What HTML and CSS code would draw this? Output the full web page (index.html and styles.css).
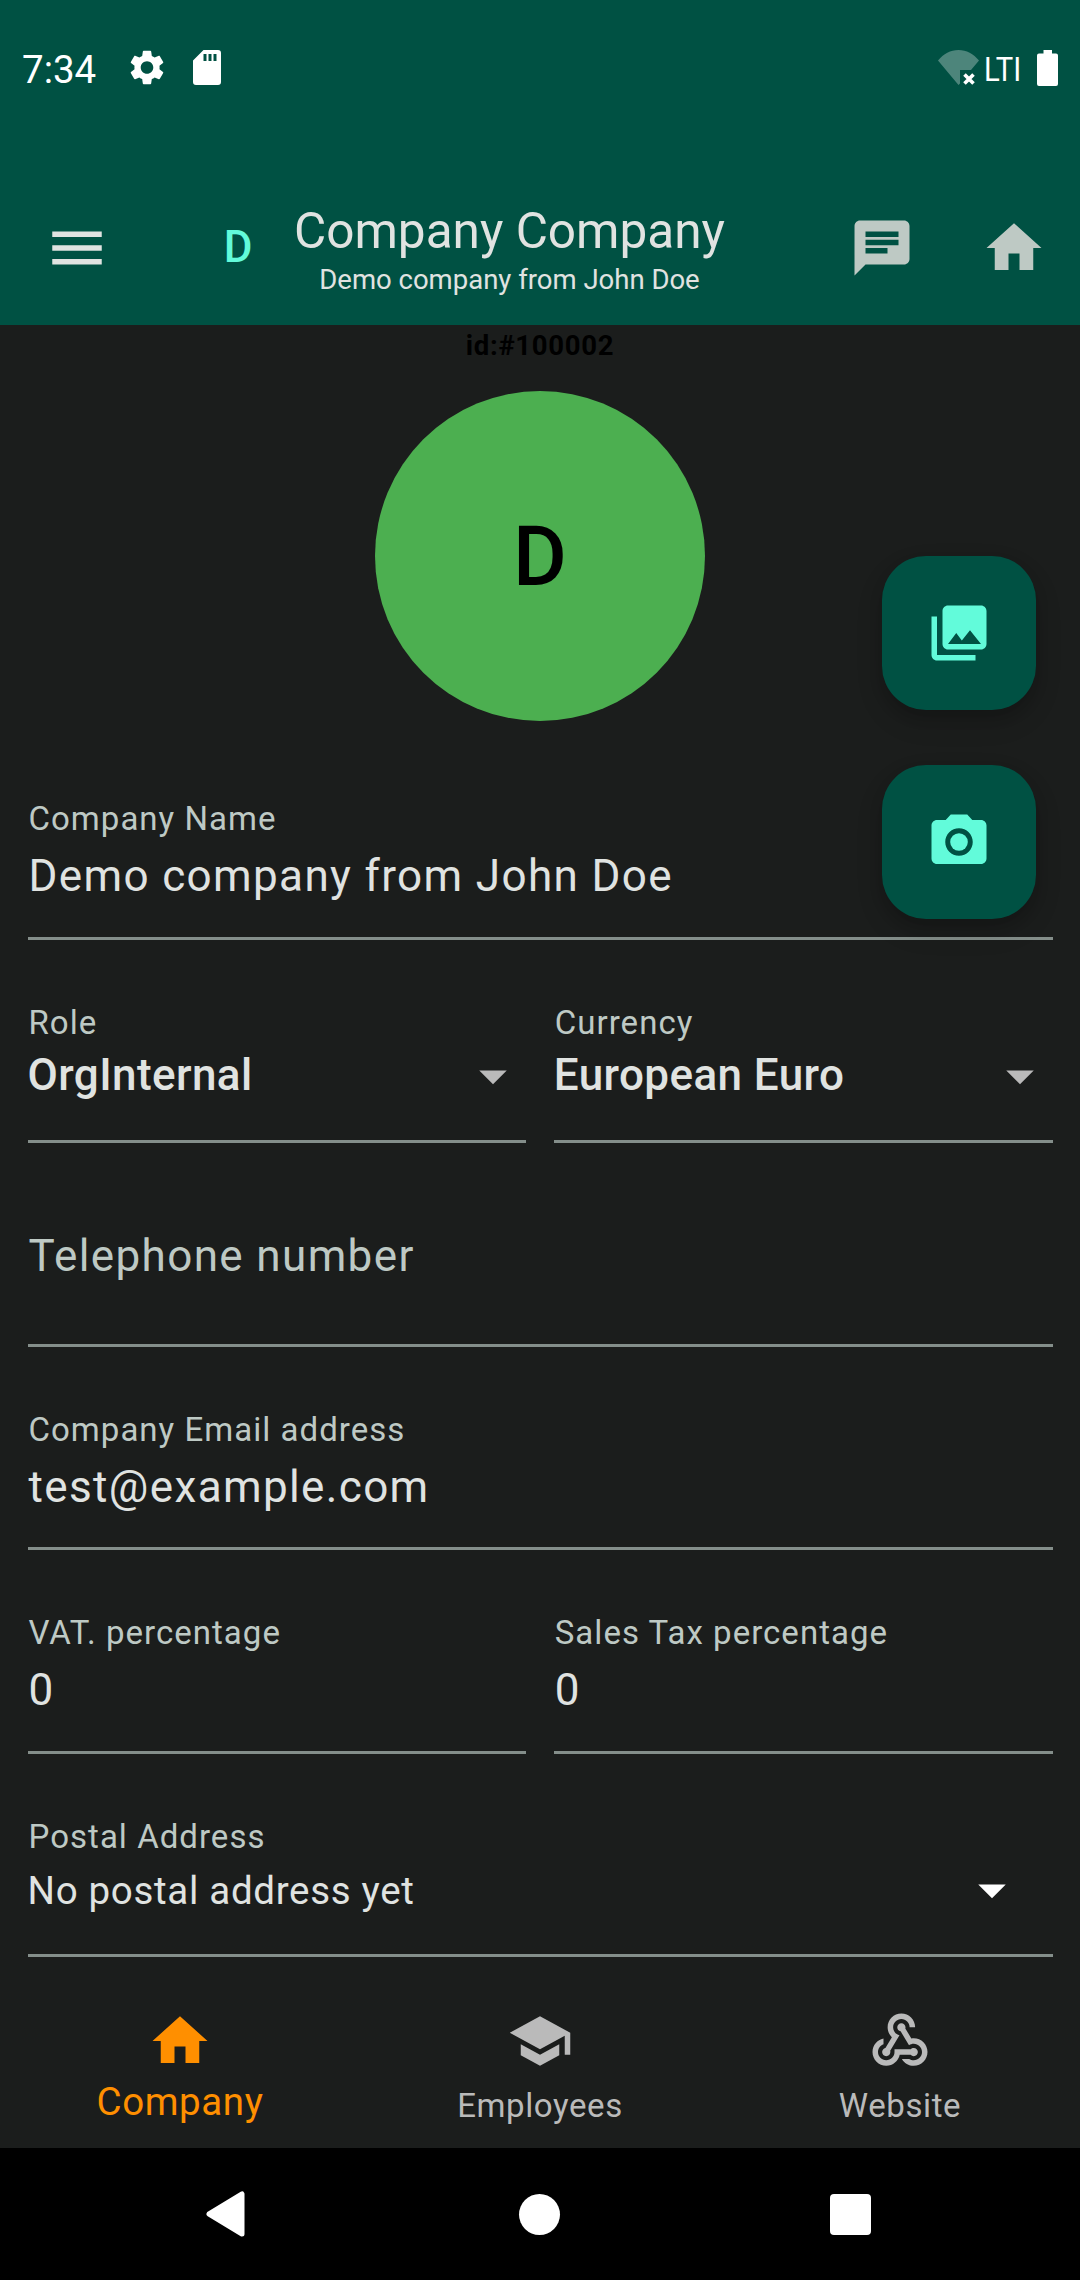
FILE: index.html
```html
<!DOCTYPE html>
<html lang="en">
<head>
<meta charset="utf-8">
<title>Company Company</title>
<link rel="stylesheet" href="styles.css">
</head>
<body>
<div class="screen">
  <header class="header">
    <div class="status-bar">
      <span class="clock">7:34</span>
      <svg class="status-gear" viewBox="2.27 2 19.46 20"><path d="M19.14 12.94c.04-.3.06-.61.06-.94 0-.32-.02-.64-.07-.94l2.03-1.58c.18-.14.23-.41.12-.61l-1.92-3.32c-.12-.22-.37-.29-.59-.22l-2.39.96c-.5-.38-1.03-.7-1.62-.94l-.36-2.54c-.04-.24-.24-.41-.48-.41h-3.84c-.24 0-.43.17-.47.41l-.36 2.54c-.59.24-1.13.57-1.62.94l-2.39-.96c-.22-.08-.47 0-.59.22L2.74 8.87c-.12.21-.08.47.12.61l2.03 1.58c-.05.3-.09.63-.09.94s.02.64.07.94l-2.03 1.58c-.18.14-.23.41-.12.61l1.92 3.32c.12.22.37.29.59.22l2.39-.96c.5.38 1.03.7 1.62.94l.36 2.54c.05.24.24.41.48.41h3.84c.24 0 .44-.17.47-.41l.36-2.54c.59-.24 1.13-.56 1.62-.94l2.39.96c.22.08.47 0 .59-.22l1.92-3.32c.12-.22.07-.47-.12-.61l-2.01-1.58zM12 15.6c-1.98 0-3.6-1.62-3.6-3.6s1.62-3.6 3.6-3.6 3.6 1.62 3.6 3.6-1.62 3.6-3.6 3.6z"/></svg>
      <svg class="status-sd" viewBox="0 0 28 35"><path fill-rule="evenodd" d="M10.500 0H25a3 3 0 0 1 3 3V32a3 3 0 0 1-3 3H3a3 3 0 0 1-3-3V10.500zM10.500 4v7h3V4zM15.500 4v7h3V4zM20.500 4v7h3V4z"/></svg>
      <span class="status-spacer"></span>
      <svg class="status-wifi" viewBox="0 0 41 35"><path opacity=".3" d="M0 10.500C5.500 4 12.500 0 20.500 0S35.500 4 41 10.500L33 20H22V33.500L20.500 35z"/><path d="M26.500 24.500l9 9M35.500 24.500l-9 9" fill="none" stroke="#fff" stroke-width="3.600"/></svg>
      <span class="network">LTI</span>
      <svg class="status-battery" viewBox="0 0 21 36"><path d="M6.500 0h8.500v3.500h4a2 2 0 0 1 2 2V34a2 2 0 0 1-2 2H2a2 2 0 0 1-2-2V5.500a2 2 0 0 1 2-2h4.500z"/></svg>
    </div>
    <div class="app-bar">
      <div class="bar-button"><svg class="icon" viewBox="0 0 24 24"><path d="M3 18h18v-2H3v2zm0-5h18v-2H3v2zm0-7v2h18V6H3z"/></svg></div>
      <div class="bar-avatar">D</div>
      <div class="bar-titles">
        <div class="bar-title">Company Company</div>
        <div class="bar-subtitle">Demo company from John Doe</div>
      </div>
      <div class="bar-actions">
        <div class="bar-button"><svg class="icon" viewBox="0 0 24 24"><path d="M20 2H4c-1.100 0-1.990.9-1.990 2L2 22l4-4h14c1.100 0 2-.9 2-2V4c0-1.100-.9-2-2-2zM6 9h12v2H6V9zm8 5H6v-2h8v2zm4-6H6V6h12v2z"/></svg></div>
        <div class="bar-button"><svg class="icon" viewBox="0 0 24 24"><path d="M10 20v-6h4v6h5v-8h3L12 3 2 12h3v8z"/></svg></div>
      </div>
    </div>
  </header>

  <main class="content">
    <div class="record-id">id:#100002</div>
    <div class="avatar">D</div>
    <form class="form">
      <div class="row">
        <div class="field"><div class="label">Company Name</div><div class="value">Demo company from John Doe</div></div>
      </div>
      <div class="row">
        <div class="field"><div class="label">Role</div><div class="select">OrgInternal<svg class="icon" viewBox="0 0 24 24"><path d="M7 10l5 5 5-5z"/></svg></div></div>
        <div class="field"><div class="label">Currency</div><div class="select">European Euro<svg class="icon" viewBox="0 0 24 24"><path d="M7 10l5 5 5-5z"/></svg></div></div>
      </div>
      <div class="row">
        <div class="field"><div class="placeholder">Telephone number</div></div>
      </div>
      <div class="row">
        <div class="field"><div class="label">Company Email address</div><div class="value">test@example.com</div></div>
      </div>
      <div class="row">
        <div class="field"><div class="label">VAT. percentage</div><div class="value">0</div></div>
        <div class="field"><div class="label">Sales Tax percentage</div><div class="value">0</div></div>
      </div>
      <div class="row">
        <div class="field"><div class="label">Postal Address</div><div class="select select-address">No postal address yet<svg class="icon" viewBox="0 0 24 24"><path d="M7 10l5 5 5-5z"/></svg></div></div>
      </div>
    </form>
    <div class="fabs">
      <div class="fab"><svg class="icon" viewBox="0 0 24 24"><path d="M22 16V4c0-1.100-.9-2-2-2H8c-1.100 0-2 .9-2 2v12c0 1.100.9 2 2 2h12c1.100 0 2-.9 2-2zm-11-4l2.030 2.710L16 11l4 5H8l3-4zM2 6v14c0 1.100.9 2 2 2h14v-2H4V6H2z"/></svg></div>
      <div class="fab"><svg class="icon" viewBox="0 0 24 24"><circle cx="12" cy="12" r="3.200"/><path d="M9 2L7.170 4H4c-1.100 0-2 .9-2 2v12c0 1.100.9 2 2 2h16c1.100 0 2-.9 2-2V6c0-1.100-.9-2-2-2h-3.170L15 2H9zm3 15c-2.760 0-5-2.240-5-5s2.240-5 5-5 5 2.240 5 5-2.240 5-5 5z"/></svg></div>
    </div>
  </main>

  <nav class="tabs">
    <div class="tab tab-active"><svg class="icon" viewBox="0 0 24 24"><path d="M10 20v-6h4v6h5v-8h3L12 3 2 12h3v8z"/></svg><span>Company</span></div>
    <div class="tab"><svg class="icon" viewBox="0 0 24 24"><path d="M5 13.180v4L12 21l7-3.820v-4L12 17l-7-3.820zM12 3L1 9l11 6 9-4.910V17h2V9L12 3z"/></svg><span>Employees</span></div>
    <div class="tab"><svg class="icon" viewBox="0 0 24 24"><path d="M10,15l5.880,0c0.270-0.310,0.670-0.500,1.120-0.500c0.830,0,1.500,0.670,1.500,1.500c0,0.830-0.670,1.500-1.500,1.500c-0.440,0-0.840-0.190-1.120-0.500l-3.980,0c-0.460,2.280-2.480,4-4.900,4c-2.760,0-5-2.240-5-5c0-2.420,1.720-4.440,4-4.900l0,2.070C4.840,13.580,4,14.700,4,16c0,1.650,1.350,3,3,3s3-1.350,3-3V15z M12.500,4c1.650,0,3,1.350,3,3h2c0-2.760-2.240-5-5-5c-2.760,0-5,2.240-5,5c0,1.430,0.600,2.710,1.550,3.620l-2.350,3.900C6.020,14.660,5.500,15.270,5.500,16c0,0.830,0.670,1.500,1.500,1.500s1.500-0.670,1.500-1.500c0-0.160-0.020-0.310-0.070-0.450l3.380-5.630C10.490,9.610,9.500,8.420,9.500,7C9.500,5.350,10.850,4,12.500,4z M17,13c-0.640,0-1.230,0.200-1.720,0.540l-3.050-5.070C11.530,8.350,11,7.740,11,7c0-0.830,0.670-1.500,1.500-1.500S14,6.170,14,7c0,0.150-0.020,0.290-0.060,0.430l2.190,3.650C16.410,11.030,16.700,11,17,11c2.760,0,5,2.240,5,5c0,2.760-2.240,5-5,5c-1.850,0-3.470-1.010-4.330-2.500l2.670,0C15.820,18.820,16.390,19,17,19c1.650,0,3-1.350,3-3S18.650,13,17,13z"/></svg><span>Website</span></div>
  </nav>

  <div class="system-nav">
    <svg class="nav-back" viewBox="0 0 39 46"><path d="M3 23L36 3V43z" stroke="#fff" stroke-width="5" stroke-linejoin="round"/></svg>
    <span class="nav-home"></span>
    <span class="nav-recents"></span>
  </div>
</div>
</body>
</html>
```
FILE: styles.css
```css
* { box-sizing: border-box; }

body {
  margin: 0;
  background: #1b1d1c;
  font-family: Roboto, "Liberation Sans", sans-serif;
  color: #e0e3e1;
}

svg { display: block; fill: currentColor; flex: none; }

.icon { width: 66px; height: 66px; }

.screen {
  display: flex;
  flex-direction: column;
  width: 1080px;
  height: 2280px;
  overflow: hidden;
  background: #1b1d1c;
}

/* Header */
.header { height: 325px; background: #005143; }

.status-bar {
  display: flex;
  align-items: center;
  height: 171px;
  padding: 0 22px 36px 22px;
  color: #fff;
}

.clock { width: 77px; padding-top: 5px; font-size: 38.5px; line-height: 46px; }
.status-gear { width: 34px; height: 35px; margin-left: 31px; }
.status-sd { width: 28px; height: 35px; margin-left: 29px; }
.status-spacer { flex: 1; }
.status-wifi { width: 41px; height: 35px; }
.network {
  width: 37px;
  margin-left: 5px;
  padding-top: 2px;
  font-size: 34px;
  line-height: 42px;
  transform: scaleX(0.86);
  transform-origin: 0 50%;
}
.status-battery { width: 21px; height: 36px; margin-left: 16px; }

.app-bar { display: flex; align-items: center; height: 154px; padding-left: 11px; }
.bar-button { display: flex; align-items: center; justify-content: center; width: 132px; height: 132px; }
.bar-avatar {
  width: 110px;
  margin-left: 40px;
  padding-bottom: 2px;
  text-align: center;
  font-size: 44px;
  font-weight: 500;
  line-height: 52px;
  color: #62fbda;
}
.bar-titles { width: 431px; margin-left: 1px; text-align: center; white-space: nowrap; }
.bar-title { font-size: 49.5px; line-height: 58px; }
.bar-subtitle { height: 34px; padding-top: 4px; font-size: 27.5px; line-height: 32px; }
.bar-actions { display: flex; margin-left: auto; color: #bec9c4; }

/* Content */
.content { position: relative; flex: 1; }

.record-id {
  height: 66px;
  padding-top: 4px;
  text-align: center;
  font-size: 27.5px;
  font-weight: 700;
  line-height: 33px;
  letter-spacing: 0.69px;
  color: #000;
}

.avatar {
  width: 330px;
  height: 330px;
  margin: 0 auto;
  border-radius: 50%;
  background: #4caf50;
  text-align: center;
  font-size: 82.5px;
  font-weight: 500;
  line-height: 331px;
  color: #000;
}

.form { padding: 15.25px 27.5px 0; }
.row { display: flex; gap: 27.5px; }
.field { flex: 1; height: 203.5px; padding-top: 63px; border-bottom: 3px solid #848e8a; }

.label {
  padding-left: 1px;
  font-size: 33px;
  line-height: 40px;
  letter-spacing: 1.03px;
  color: #bec9c4;
}
.value { padding: 11px 0 0 1px; font-size: 44px; line-height: 52px; letter-spacing: 1.375px; }
.placeholder { padding: 23.5px 0 0 1px; font-size: 44px; line-height: 52px; letter-spacing: 1.375px; color: #bec9c4; }

.select {
  display: flex;
  align-items: center;
  justify-content: space-between;
  height: 66px;
  padding-bottom: 1px;
  font-size: 44px;
  font-weight: 500;
  letter-spacing: 0.41px;
}
.select .icon { margin-top: 1px; color: #bababa; }
.select-address { padding: 1px 27.5px 0 0; font-size: 38.5px; font-weight: 400; letter-spacing: 0.69px; line-height: 47px; }
.select-address .icon { margin-top: 0; color: #fff; }

.fabs {
  position: absolute;
  top: 231px;
  right: 44px;
  display: flex;
  flex-direction: column;
  gap: 55px;
}
.fab {
  display: flex;
  align-items: center;
  justify-content: center;
  width: 154px;
  height: 154px;
  border-radius: 44px;
  background: #005143;
  color: #62fbda;
  box-shadow: 0 8px 14px rgba(0, 0, 0, 0.14), 0 12px 28px rgba(0, 0, 0, 0.12);
}

/* Bottom tabs */
.tabs { display: flex; height: 153px; }
.tab {
  flex: 1;
  display: flex;
  flex-direction: column;
  align-items: center;
  gap: 9px;
  padding-top: 13px;
  font-size: 33px;
  line-height: 45px;
  letter-spacing: 0.6px;
  color: #bababa;
}
.tab-active { gap: 5px; font-size: 38.5px; color: #ff8f00; }

/* System navigation */
.system-nav {
  display: flex;
  align-items: center;
  height: 132px;
  padding-left: 206px;
  background: #000;
  color: #fff;
}
.nav-back { width: 39px; height: 46px; }
.nav-home { width: 41px; height: 41px; margin-left: 273.5px; border-radius: 50%; background: #fff; }
.nav-recents { width: 41px; height: 41px; margin-left: 270.5px; border-radius: 4px; background: #fff; }
```
